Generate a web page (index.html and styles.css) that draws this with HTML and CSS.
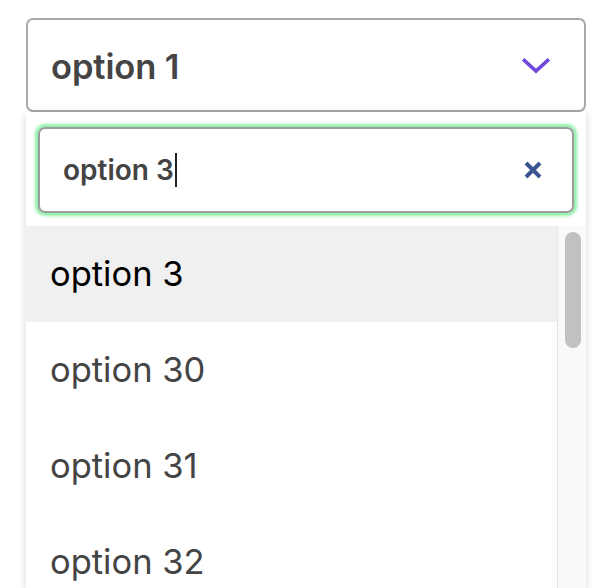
FILE: index.html
```html
<!DOCTYPE html>
<html lang="en">
<head>
<meta charset="utf-8">
<title>Select</title>
<link rel="stylesheet" href="styles.css">
</head>
<body>
<div class="page">
  <div class="select">
    <span class="select-value">option 1</span>
    <svg class="chevron" width="28" height="16" viewBox="0 0 28 16" aria-hidden="true">
      <path d="M2.5 2.5 L14 13 L25.5 2.5" fill="none" stroke="#6f48d9" stroke-width="3.6" stroke-linecap="square"/>
    </svg>
  </div>
  <div class="panel">
    <div class="panel-head">
      <div class="search">
        <span class="search-text">option 3<span class="caret"></span></span>
        <svg class="clear" width="22" height="20" viewBox="0 0 22 20" aria-hidden="true">
          <path d="M4 3 L18 17 M18 3 L4 17" fill="none" stroke="#3b5593" stroke-width="4" stroke-linecap="butt"/>
        </svg>
      </div>
    </div>
    <div class="list-wrap">
      <ul class="list">
        <li class="item active">option 3</li>
        <li class="item">option 30</li>
        <li class="item">option 31</li>
        <li class="item">option 32</li>
      </ul>
      <div class="track"><div class="thumb"></div></div>
    </div>
  </div>
</div>
</body>
</html>
```
FILE: styles.css
```css
* { box-sizing: border-box; }
html, body {
  margin: 0;
  padding: 0;
  background: #ffffff;
  font-family: Inter, "Noto Sans", "Liberation Sans", sans-serif;
  overflow: hidden;
}
.page {
  padding: 18px 0 0 26px;
  width: 614px;
  height: 588px;
}
.select {
  width: 560px;
  height: 94px;
  border: 2px solid #a8a8a8;
  border-radius: 7px;
  display: flex;
  align-items: center;
  justify-content: space-between;
  padding: 2px 34px 0 23px;
  background: #fff;
}
.select-value {
  font-size: 34.5px;
  font-weight: 600;
  color: #444444;
  letter-spacing: -0.1px;
}
.chevron { display: block; }
.panel {
  width: 560px;
  background: #fff;
  box-shadow: 0 2px 8px rgba(0, 0, 0, 0.16);
}
.panel-head {
  padding: 15px 12px 13px 12px;
}
.search {
  height: 86px;
  border: 2px solid #9c9c9c;
  border-radius: 7px;
  box-shadow: 0 0 3px 3px rgba(130, 238, 160, 0.9);
  display: flex;
  align-items: center;
  justify-content: space-between;
  padding: 0 28px 0 23px;
}
.search-text {
  font-size: 28px;
  font-weight: 600;
  color: #444444;
  display: flex;
  align-items: center;
}
.caret {
  display: inline-block;
  width: 2px;
  height: 34px;
  background: #222;
  margin-left: 1px;
}
.clear { display: block; }
.list-wrap {
  display: flex;
  height: 362px;
  overflow: hidden;
}
.list {
  list-style: none;
  margin: 0;
  padding: 0;
  flex: 1;
}
.item {
  height: 96px;
  line-height: 96px;
  padding-left: 24px;
  font-size: 34.5px;
  font-weight: 400;
  color: #444444;
}
.item.active {
  background: #f0f0f0;
  color: #000000;
}
.track {
  width: 29px;
  background: #f9f9f9;
  border-left: 1px solid #e4e4e4;
  padding: 6px 4px 0 7px;
}
.thumb {
  width: 16px;
  height: 116px;
  border-radius: 8px;
  background: #c1c1c1;
}
```
